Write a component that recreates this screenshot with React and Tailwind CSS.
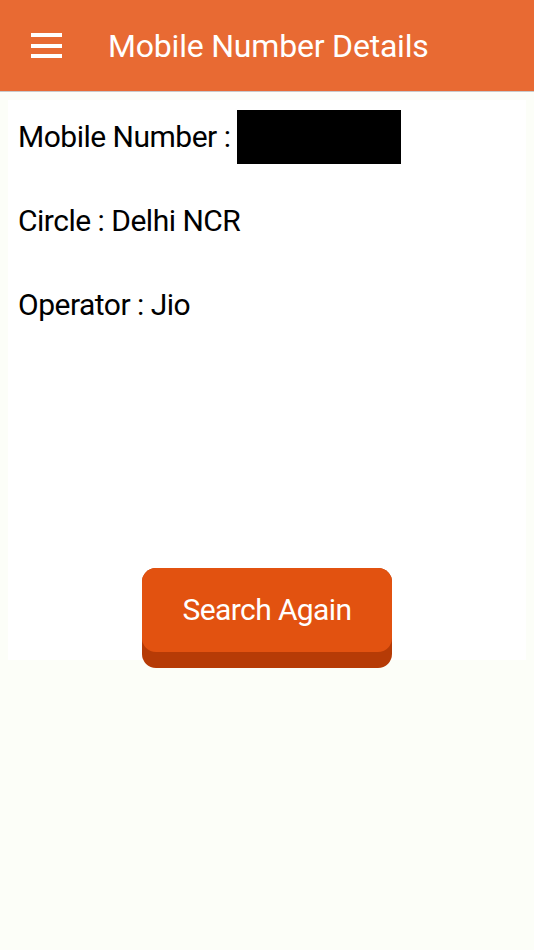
import React from "react";

export default function App() {
  return (
    <div className="w-[534px] h-[950px] bg-[#fcfef8] flex flex-col" style={{ fontFamily: "Roboto, 'Liberation Sans', sans-serif" }}>
      <header className="h-[92px] bg-[#e86a33] border-b border-[#c9c9c9] flex items-center shrink-0">
        <div className="ml-[31px] w-[31px] flex flex-col gap-[6.5px]">
          <span className="block h-[4px] bg-white" />
          <span className="block h-[4px] bg-white" />
          <span className="block h-[4px] bg-white" />
        </div>
        <h1 className="ml-[46px] text-white text-[32px] leading-none font-normal tracking-[-0.2px]">Mobile Number Details</h1>
      </header>
      <main className="mx-[8px] mt-[8px] h-[560px] bg-white flex flex-col">
        <div className="pl-[10px] pt-[9px] flex flex-col text-black text-[30px] leading-none tracking-[-0.5px]">
          <div className="flex items-center h-[55px]">
            <span>Mobile Number :</span>
            <span className="ml-[7px] w-[164px] h-[54px] bg-black" />
          </div>
          <div className="mt-[29px] h-[55px] flex items-center">Circle : Delhi NCR</div>
          <div className="mt-[29px] h-[55px] flex items-center">Operator : Jio</div>
        </div>
        <div className="mt-[236px] flex justify-center">
          <button className="w-[250px] h-[100px] rounded-[14px] bg-[#b63b06] flex flex-col">
            <span className="h-[84px] rounded-[14px] bg-[#e25210] flex items-center justify-center text-white text-[30px] leading-none tracking-[-0.6px]">Search Again</span>
          </button>
        </div>
      </main>
    </div>
  );
}
